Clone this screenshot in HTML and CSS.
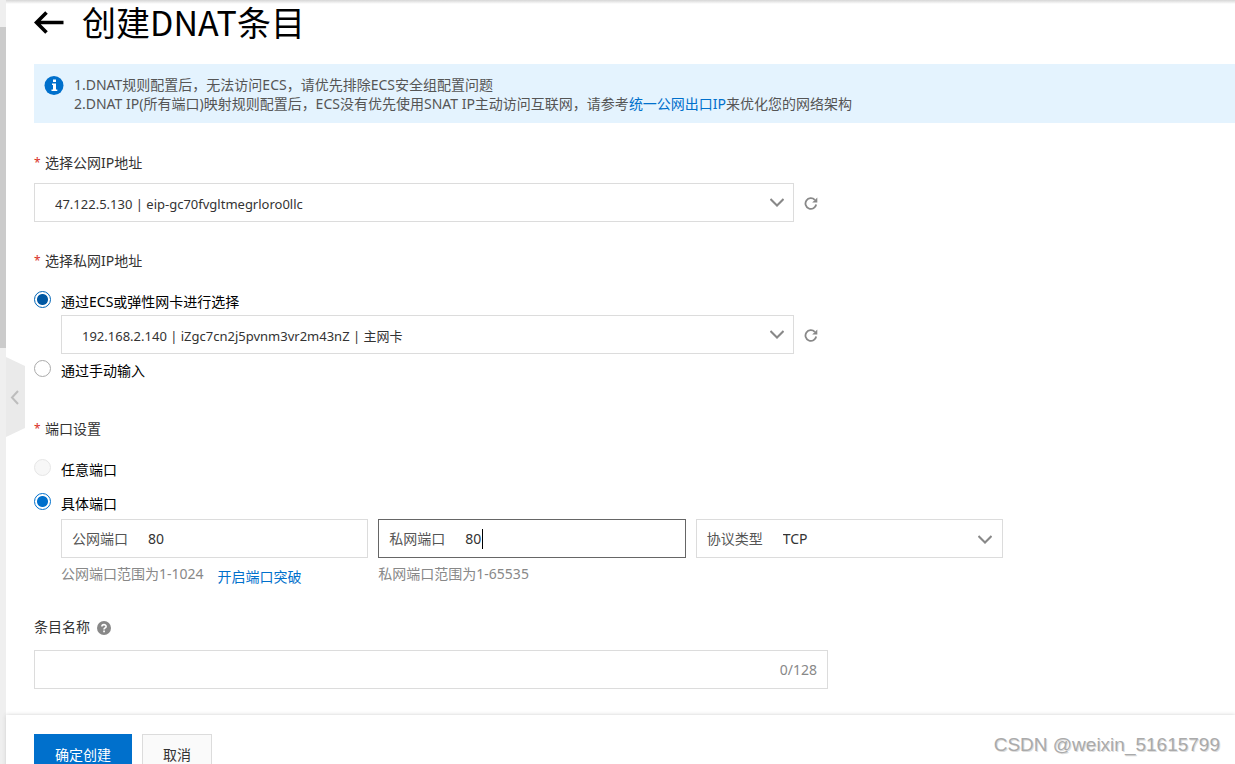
FILE: index.html
```html
<!DOCTYPE html>
<html lang="zh-CN">
<head>
<meta charset="utf-8">
<meta name="viewport" content="width=device-width, initial-scale=1">
<title>创建DNAT条目</title>
<link rel="stylesheet" href="styles.css">
</head>
<body>
<div class="app">
  <div class="rail"><div class="rail-thumb"></div></div>
  <button class="collapse" type="button" aria-label="收起">
    <svg class="collapse-shape" viewBox="0 0 19 80" width="19" height="80" aria-hidden="true"><path d="M0 0 19 9V71L0 80Z" fill="#eaeaea"/><path d="M12 34 6 40.500 12 47" fill="none" stroke="#bdbdbd" stroke-width="2"/></svg>
  </button>
  <form class="page">
    <main class="content">
      <header class="heading">
        <a class="back" href="#" aria-label="返回"><svg viewBox="0 0 30 24" width="30" height="24" aria-hidden="true"><path d="M12.500 1.500 2.500 11.500 12.500 21.500M2.500 11.500H29.500" fill="none" stroke="#000" stroke-width="3.600"/></svg></a>
        <h1 class="title">创建DNAT条目</h1>
      </header>

      <section class="notice">
        <svg class="notice-icon" viewBox="0 0 20 20" width="20" height="20" aria-hidden="true"><circle cx="10" cy="10.500" r="9.500" fill="#0070cc"/><path d="M9 4.500h3v2.400H9ZM8 8.500h4v6h1.300v1.600H7.500V14.500H9V10.100H8Z" fill="#fff"/></svg>
        <div class="notice-text">
          <p>1.DNAT规则配置后，无法访问ECS，请优先排除ECS安全组配置问题</p>
          <p>2.DNAT IP(所有端口)映射规则配置后，ECS没有优先使用SNAT IP主动访问互联网，请参考<a class="link" href="#">统一公网出口IP</a>来优化您的网络架构</p>
        </div>
      </section>

      <section class="group first">
        <label class="label required" for="eip">选择公网IP地址</label>
        <div class="row">
          <div class="field">
            <select id="eip" class="control select"><option>47.122.5.130 | eip-gc70fvgltmegrloro0llc</option></select>
            <svg class="chevron" viewBox="0 0 14 9" width="14" height="9" aria-hidden="true"><path d="M0.500 1 7 7.500 13.500 1"/></svg>
          </div>
          <button class="refresh" type="button" aria-label="刷新"><svg viewBox="0 0 14 14" width="14" height="14" aria-hidden="true"><path d="M12.200 8.500A5.400 5.400 0 1 1 10.800 3.800" fill="none" stroke="#888" stroke-width="1.800"/><path d="M13.300 1.500V6.500H8.200Z" fill="#888"/></svg></button>
        </div>
      </section>

      <section class="group">
        <p class="label required">选择私网IP地址</p>
        <label class="choice"><input class="radio hovered" type="radio" name="private" checked><span>通过ECS或弹性网卡进行选择</span></label>
        <div class="row nested">
          <div class="field">
            <select class="control select" aria-label="弹性网卡"><option>192.168.2.140 | iZgc7cn2j5pvnm3vr2m43nZ | 主网卡</option></select>
            <svg class="chevron" viewBox="0 0 14 9" width="14" height="9" aria-hidden="true"><path d="M0.500 1 7 7.500 13.500 1"/></svg>
          </div>
          <button class="refresh" type="button" aria-label="刷新"><svg viewBox="0 0 14 14" width="14" height="14" aria-hidden="true"><path d="M12.200 8.500A5.400 5.400 0 1 1 10.800 3.800" fill="none" stroke="#888" stroke-width="1.800"/><path d="M13.300 1.500V6.500H8.200Z" fill="#888"/></svg></button>
        </div>
        <label class="choice after-field"><input class="radio" type="radio" name="private"><span>通过手动输入</span></label>
      </section>

      <section class="group ports">
        <p class="label required">端口设置</p>
        <label class="choice"><input class="radio" type="radio" name="port" disabled><span>任意端口</span></label>
        <label class="choice spaced"><input class="radio" type="radio" name="port" checked><span>具体端口</span></label>
        <div class="port-grid">
          <div>
            <div class="control combo"><label for="pub">公网端口</label><input id="pub" class="combo-input" type="text" value="80"></div>
            <p class="hint">公网端口范围为1-1024<a class="link hint-link" href="#">开启端口突破</a></p>
          </div>
          <div>
            <div class="control combo active"><label for="priv">私网端口</label><div class="combo-entry"><input id="priv" class="combo-input" type="text" value="80"><span class="caret"></span></div></div>
            <p class="hint">私网端口范围为1-65535</p>
          </div>
          <div>
            <div class="control combo"><label for="proto">协议类型</label><select id="proto" class="combo-input"><option>TCP</option></select>
              <svg class="chevron" viewBox="0 0 14 9" width="14" height="9" aria-hidden="true"><path d="M0.500 1 7 7.500 13.500 1"/></svg>
            </div>
          </div>
        </div>
      </section>

      <section class="group entry">
        <label class="label" for="name">条目名称<svg class="help" viewBox="0 0 14 14" width="14" height="14" aria-hidden="true"><circle cx="7" cy="7" r="7" fill="#888"/><path d="M4.900 5.600C4.900 3 9.100 3 9.100 5.400 9.100 7 7 6.800 7 8.600" fill="none" stroke="#fff" stroke-width="1.600"/><path d="M6.200 9.600h1.700v1.600H6.200Z" fill="#fff"/></svg></label>
        <div class="control combo name"><input id="name" class="combo-input" type="text"><span class="count">0/128</span></div>
      </section>
    </main>
    <footer class="footer">
      <button class="button primary" type="button">确定创建</button>
      <button class="button" type="button">取消</button>
      <span class="watermark">CSDN @weixin_51615799</span>
    </footer>
  </form>
</div>
</body>
</html>
```

FILE: styles.css
```css
* { box-sizing: border-box; }

body {
  margin: 0;
  color: #333;
  background: #fff;
  font: 14px/20px "Noto Sans", "Noto Sans CJK SC", sans-serif;
}

h1, p { margin: 0; }

input, select, button { font: inherit; color: inherit; }

.app {
  display: flex;
  position: relative;
  height: 100vh;
  overflow: hidden;
  background: linear-gradient(#d6d6d6, #fff 4px);
}

.rail {
  flex: 0 0 6px;
  padding-top: 27px;
  background: #efefef;
}

.rail-thumb { height: 321px; background: #cbcbcb; }

.collapse {
  position: absolute;
  top: 357px;
  left: 6px;
  padding: 0;
  border: 0;
  background: none;
}

.collapse-shape { display: block; }

.page { flex: 1; min-width: 0; }

.content { padding: 0 0 26px 28px; }

.heading {
  display: flex;
  align-items: center;
  gap: 18px;
  height: 46px;
}

.back svg { display: block; }

.title {
  padding-bottom: 2px;
  color: #000;
  font-family: "Noto Sans CJK SC", "Noto Sans", sans-serif;
  font-size: 34px;
  font-weight: 400;
  line-height: 44px;
}

.notice {
  display: flex;
  gap: 10px;
  margin-top: 18px;
  padding: 11px 10px 10px;
  color: #555;
  background: #e4f3fe;
  line-height: 19px;
}

.notice-icon { flex: none; }

.link { color: #0070cc; text-decoration: none; }

.group { padding-top: 29px; }
.group.first { padding-top: 30px; }

.label {
  display: flex;
  align-items: center;
  margin-bottom: 10px;
}

.required::before {
  content: "*";
  width: 11px;
  color: #d93026;
  font-size: 12px;
}

.row { display: flex; align-items: center; gap: 10px; max-width: 784px; }

.nested { margin-left: 27px; max-width: 757px; margin-top: 3px; }

.field { position: relative; flex: 1; }

.control {
  width: 100%;
  height: 39px;
  border: 1px solid #dcdcdc;
  border-radius: 0;
  background: #fff;
}

.select {
  display: block;
  padding: 2px 40px 0 20px;
  font-size: 13px;
  appearance: none;
}

.chevron {
  position: absolute;
  top: 15px;
  right: 10px;
  fill: none;
  stroke: #888;
  stroke-width: 2;
  pointer-events: none;
}

.refresh { padding: 0; border: 0; background: none; }
.refresh svg { display: block; }

.choice {
  display: flex;
  align-items: flex-start;
  gap: 10px;
  margin-top: 20px;
  color: #000;
}

.choice span { padding-top: 1px; }
.choice.after-field { margin-top: 6px; }
.choice.spaced { margin-top: 13px; }

.radio {
  appearance: none;
  flex: none;
  width: 17px;
  height: 17px;
  margin: 0;
  border: 1px solid #aaa;
  border-radius: 50%;
  background: #fff;
}

.radio:checked {
  border-color: #0070cc;
  background: radial-gradient(circle, #0070cc 5px, #fff 6px);
}

.radio.hovered:checked {
  border-color: #0064b6;
  background: radial-gradient(circle, #0058a3 5px, #fff 6px);
}

.radio:disabled { border-color: #e6e6e6; background: #f7f7f7; }

.ports { padding-top: 38px; }

.port-grid {
  display: grid;
  grid-template-columns: repeat(3, 1fr);
  gap: 10px;
  max-width: 942px;
  margin: 5px 0 0 27px;
}

.combo {
  display: flex;
  position: relative;
  align-items: center;
  gap: 20px;
  padding: 0 10px;
  color: #555;
}

.combo.active { border-color: #666; }

.combo-input {
  flex: 1;
  width: 100%;
  min-width: 0;
  padding: 0;
  border: 0;
  outline: 0;
  color: #333;
  background: none;
  appearance: none;
}

.combo-entry { display: flex; position: relative; flex: 1; }

.caret {
  position: absolute;
  left: 17px;
  width: 1px;
  height: 20px;
  background: #000;
}

.hint {
  display: flex;
  align-items: flex-start;
  gap: 14px;
  margin-top: 6px;
  color: #888;
}

.hint-link { padding-top: 3px; }

.entry { padding-top: 30px; }
.entry .label { margin-bottom: 13px; }

.help { margin: 2px 0 0 7px; }

.name { max-width: 794px; }

.count { color: #888; }

.footer {
  display: flex;
  align-items: flex-start;
  gap: 10px;
  padding: 19px 15px 20px 28px;
  box-shadow: 0 0 4px #cfcfcf;
}

.button {
  height: 39px;
  padding: 2px 20px 0;
  border: 1px solid #dcdcdc;
  color: #333;
  background: #fafafa;
}

.primary { border-color: #0070cc; color: #fff; background: #0070cc; }

.watermark {
  margin-left: auto;
  color: #aaa;
  font: 19px/22px "Liberation Sans", Arial, sans-serif;
  text-shadow: 1px 1px 0 #ddd;
}
```
